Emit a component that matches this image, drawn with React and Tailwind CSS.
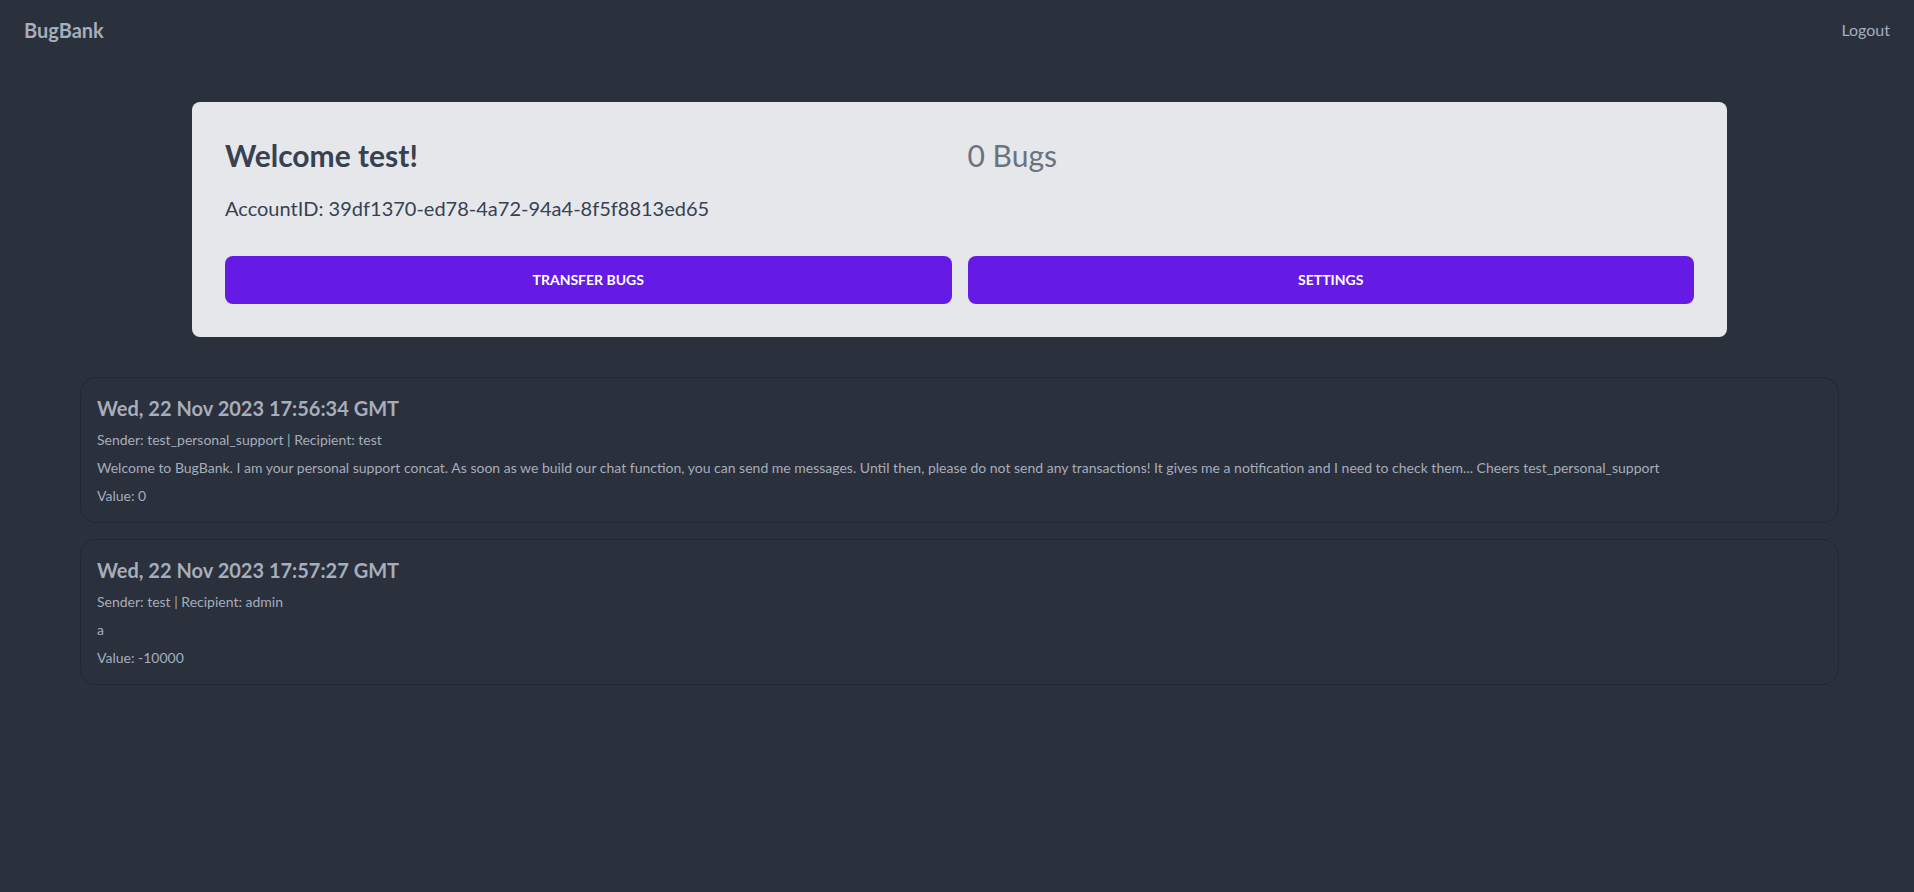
const transactions = [
  {
    date: "Wed, 22 Nov 2023 17:56:34 GMT",
    sender: "test_personal_support",
    recipient: "test",
    description:
      "Welcome to BugBank. I am your personal support concat. As soon as we build our chat function, you can send me messages. Until then, please do not send any transactions! It gives me a notification and I need to check them... Cheers test_personal_support",
    value: 0,
  },
  {
    date: "Wed, 22 Nov 2023 17:57:27 GMT",
    sender: "test",
    recipient: "admin",
    description: "a",
    value: -10000,
  },
];

const TransactionCard = ({ tx }) => (
  <div className="rounded-2xl border border-[#232833] bg-[#2a303c] p-4">
    <h3 className="text-xl font-bold text-[#a6adbb]">{tx.date}</h3>
    <p className="mt-2 text-sm text-[#a6adbb]">
      Sender: {tx.sender} | Recipient: {tx.recipient}
    </p>
    <p className="mt-2 text-sm text-[#a6adbb]">{tx.description}</p>
    <p className="mt-2 text-sm text-[#a6adbb]">Value: {tx.value}</p>
  </div>
);

export default function App() {
  return (
    <div className="min-h-screen bg-[#2a303c] font-['Lato',sans-serif]">
      <nav className="flex items-center justify-between px-6 py-4">
        <a className="text-xl font-bold text-[#a6adbb]">BugBank</a>
        <a className="text-base text-[#a6adbb]">Logout</a>
      </nav>

      <div className="ml-[192px] mt-[42px] w-[1535px] rounded-lg bg-[#e5e7eb] px-[33px] pb-[33px] pt-[35px]">
        <div className="grid grid-cols-2 gap-4">
          <div>
            <h1 className="text-3xl font-bold text-[#374151]">Welcome test!</h1>
            <p className="mt-[21px] text-xl text-[#374151]">
              AccountID: 39df1370-ed78-4a72-94a4-8f5f8813ed65
            </p>
          </div>
          <div>
            <p className="text-3xl text-[#6b7280]">0 Bugs</p>
          </div>
        </div>
        <div className="mt-[34px] grid grid-cols-2 gap-4">
          <button className="h-12 rounded-lg bg-[#661ae6] text-sm font-bold uppercase text-white">
            Transfer Bugs
          </button>
          <button className="h-12 rounded-lg bg-[#661ae6] text-sm font-bold uppercase text-white">
            Settings
          </button>
        </div>
      </div>

      <div className="ml-20 mt-10 w-[1759px] space-y-4">
        {transactions.map((tx) => (
          <TransactionCard key={tx.date} tx={tx} />
        ))}
      </div>
    </div>
  );
}
